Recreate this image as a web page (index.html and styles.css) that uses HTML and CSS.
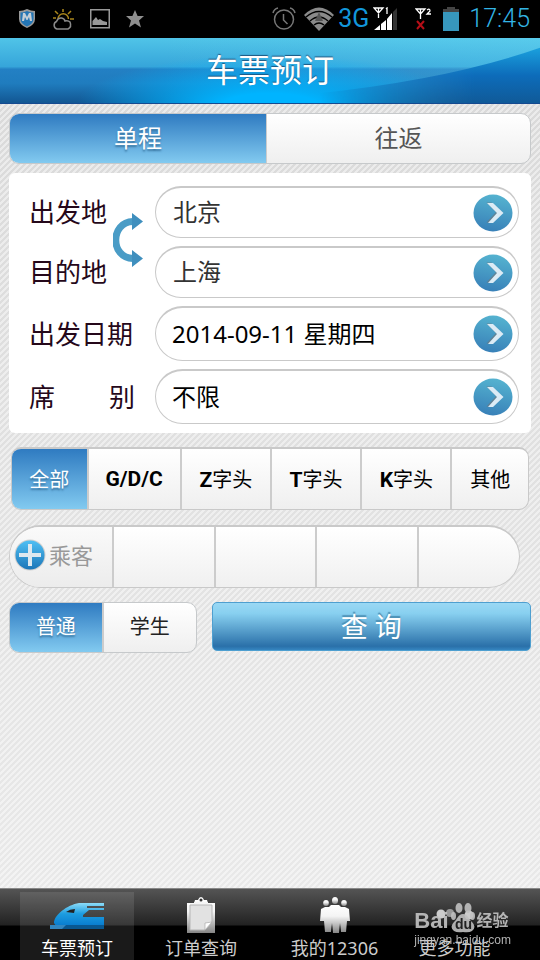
FILE: index.html
```html
<!DOCTYPE html>
<html lang="zh-CN">
<head>
<meta charset="utf-8">
<meta name="viewport" content="width=device-width, initial-scale=1">
<title>车票预订</title>
<link rel="stylesheet" href="styles.css">
</head>
<body>
<svg width="0" height="0" class="defs" aria-hidden="true">
  <defs>
    <linearGradient id="go" x1="0.6" y1="0" x2="0.4" y2="1"><stop offset="0" stop-color="#55b3d0"/><stop offset="1" stop-color="#3880b8"/></linearGradient>
    <linearGradient id="plus" x1="0" y1="0" x2="0" y2="1"><stop offset="0" stop-color="#50c0f4"/><stop offset="1" stop-color="#1c76b8"/></linearGradient>
    <linearGradient id="silver" x1="0" y1="0" x2="0" y2="1"><stop offset="0" stop-color="#fff"/><stop offset="0.4" stop-color="#f4f4f4"/><stop offset="1" stop-color="#858585"/></linearGradient>
    <linearGradient id="train" x1="0" y1="0" x2="0" y2="1"><stop offset="0" stop-color="#8cdcf8"/><stop offset="0.45" stop-color="#1c9ce0"/><stop offset="1" stop-color="#0678cc"/></linearGradient>
    <symbol id="chevron" viewBox="0 0 40 38">
      <ellipse cx="20" cy="19" rx="19.5" ry="18.5" fill="url(#go)"/>
      <path d="M13.500 8.500h5L29 18 18.500 28.500h-5L23 18z" fill="#777" opacity=".6"/>
      <path d="M14 9h6l10.500 10L20 29h-5l9-10z" fill="#dcebf5"/>
    </symbol>
  </defs>
</svg>

<div class="status">
  <div class="status-group notices">
    <svg width="18" height="20" viewBox="0 0 18 20"><path d="M1 2Q5 2 9 0q4 2 8 2v8q0 6-8 9-8-3-8-9z" fill="#999"/><path d="M2.500 3.500Q6 3.500 9 2q3 1.500 6.500 1.500V10q0 5-6.500 7.500Q2.500 15 2.500 10z" fill="#2476b5"/><path d="M4 12l1-8h2l2 4 2-4h2l1 8h-2l-1-4-1.500 3h-1L7 8l-1 4z" fill="#c4ced6"/></svg>
    <svg width="22" height="23" viewBox="0 0 22 23"><g fill="none" stroke="#a9861c" stroke-width="1.500"><path d="M6 11a5 5 0 0 1 10.500 0M11 4V1M6 6L3 3M16 6l3-3M18 11h4M4 10H1"/></g><path d="M5 21a4 4 0 0 1-.5-7.500Q6 9.500 9.500 10q3 .5 3.500 3 3-1 5 1 2 5-2 7z" fill="#000" stroke="#8b8b8b" stroke-width="1.500"/></svg>
    <svg width="20" height="20" viewBox="0 0 20 20"><path d="M.75.75h18.500v18H.75z" fill="none" stroke="#999" stroke-width="1.500"/><path d="M2.500 16v-4L6 8l2 3 2-1 3 2 4 1v3z" fill="#999"/></svg>
    <svg width="18" height="18" viewBox="0 0 18 18"><path d="M9 0l2.600 6H18l-5 4.500 2 7-6-4-6 4 2-7L0 6h6.400z" fill="#8f8f8f"/></svg>
  </div>
  <div class="status-group signals">
    <svg width="24" height="24" viewBox="0 0 24 24" fill="none" stroke="#777" stroke-width="1.500"><circle cx="12" cy="12.500" r="9.500"/><path d="M11.500 7v6l4 4M1 6q1-4 5-5M23 6q-1-4-5-5"/></svg>
    <svg class="wifi" width="30" height="24" viewBox="0 0 30 24"><path d="M0 8Q15-7 30 8L15 24z" fill="#8a8a8a"/><path d="M2 10q13-11 26 0M6 14q9-8 18 0M10 18q5-4 10 0" fill="none" stroke="#000" stroke-width="1.500"/><path d="M15 5l4 9h-8z" fill="#555"/></svg>
    <span class="network">3G</span>
    <svg width="24" height="24" viewBox="0 0 24 24"><path d="M1 23l6-5v5zM8 17l5-4v10H8zM14 12l5-6v17h-5z" fill="#fff"/><path d="M20 5l4-4v22h-4z" fill="#333"/><path d="M1 1h9L5.500 6zM5.500 1v10M13 2l1-1v6" fill="none" stroke="#fff" stroke-width="1.300"/></svg>
    <svg class="sim" width="18" height="22" viewBox="0 0 18 22"><path d="M1 1h9L5.500 6zM5.500 1v10M12 2q3-2 3 1l-3 3h4" fill="none" stroke="#fff" stroke-width="1.300"/><path d="M2 13l7 8M9 13l-7 8" stroke="#b50e17" stroke-width="2"/></svg>
    <svg class="battery" width="16" height="24" viewBox="0 0 16 24"><path d="M4 0h8v2h4v4H0V2h4z" fill="#444"/><path d="M0 5h16v19H0z" fill="#3797bd"/></svg>
    <time class="clock">17:45</time>
  </div>
</div>

<header class="header">
  <svg class="gloss" viewBox="0 0 540 66" preserveAspectRatio="none" aria-hidden="true">
    <defs><linearGradient id="shade" x1="0" y1="0" x2="0" y2="1"><stop offset="0" stop-color="#1aa0dd"/><stop offset="0.500" stop-color="#0d6cba"/><stop offset="1" stop-color="#105a98"/></linearGradient>
    <linearGradient id="reveal" x1="0" y1="0" x2="1" y2="0"><stop offset="0" stop-color="#fff" stop-opacity="0"/><stop offset="0.700" stop-color="#fff"/></linearGradient>
    <mask id="fade"><path d="M320 0h220v66H320z" fill="url(#reveal)"/></mask></defs>
    <path d="M320 56Q450 42 540 10v56H320z" fill="url(#shade)" mask="url(#fade)"/>
  </svg>
  <h1>车票预订</h1>
</header>

<main class="content">
  <div class="segments trip" role="group" aria-label="行程">
    <button class="seg on" type="button" aria-pressed="true">单程</button>
    <button class="seg" type="button" aria-pressed="false">往返</button>
  </div>

  <form class="panel" id="query">
    <div class="places">
      <label for="from">出发地</label>
      <button class="field place" id="from" type="button"><span>北京</span><svg width="40" height="38"><use href="#chevron"/></svg></button>
      <label for="to">目的地</label>
      <button class="field place" id="to" type="button"><span>上海</span><svg width="40" height="38"><use href="#chevron"/></svg></button>
      <button class="swap" type="button" aria-label="交换">
        <svg width="30" height="54" viewBox="0 0 30 54"><path d="M20 8.500C-3 9-3 45 20 45.500" fill="none" stroke="#4a9cc6" stroke-width="7"/><path d="M19 0l11 8.500L19 17zM19 37l11 8.500L19 54z" fill="#3f8fbe"/></svg>
      </button>
    </div>
    <div class="details">
      <label for="date">出发日期</label>
      <button class="field" id="date" type="button"><span>2014-09-11 星期四</span><svg width="40" height="38"><use href="#chevron"/></svg></button>
      <label class="spread" for="seat"><span>席</span><span>别</span></label>
      <button class="field" id="seat" type="button"><span>不限</span><svg width="40" height="38"><use href="#chevron"/></svg></button>
    </div>
  </form>

  <div class="segments kinds" role="group" aria-label="车次类型">
    <button class="seg on" type="button" aria-pressed="true">全部</button>
    <button class="seg" type="button"><b>G/D/C</b></button>
    <button class="seg" type="button"><b>Z</b>字头</button>
    <button class="seg" type="button"><b>T</b>字头</button>
    <button class="seg" type="button"><b>K</b>字头</button>
    <button class="seg" type="button">其他</button>
  </div>

  <div class="passengers">
    <button class="add" type="button">
      <svg width="32" height="32" viewBox="0 0 32 32"><circle cx="16" cy="16" r="15.500" fill="#d0d0d0"/><circle cx="16" cy="16" r="14.500" fill="url(#plus)"/><path d="M14 5h4v9h9v4h-9v9h-4v-9H5v-4h9z" fill="#dde8ef"/></svg>
      <span>乘客</span>
    </button>
    <div class="slot"></div><div class="slot"></div><div class="slot"></div><div class="slot"></div>
  </div>

  <div class="actions">
    <div class="segments fare" role="group" aria-label="票种">
      <button class="seg on" type="button" aria-pressed="true">普通</button>
      <button class="seg" type="button" aria-pressed="false">学生</button>
    </div>
    <button class="search" type="submit" form="query">查 询</button>
  </div>
</main>

<nav class="tabs">
  <a class="tab current" href="#book">
    <svg width="56" height="38" viewBox="0 0 56 38"><path d="M5 26C5 18 18 8 30 6h25v3H38v2h17v2H40l-6 5v2h21v10H12q-5 0-7-4z" fill="url(#train)"/><path d="M17 15q4-3 9-3l-1 4z" fill="#222"/><path d="M1 28h54v4H1z" fill="#095790"/><path d="M1 28h16l-4 4H1z" fill="#3286c0"/></svg>
    <span>车票预订</span>
  </a>
  <a class="tab" href="#orders">
    <svg width="28" height="38" viewBox="0 0 28 38"><path d="M0 6h7l1-3h3q1-3 3-3t3 3h3l1 3h7v30H0z" fill="url(#silver)"/><circle cx="14" cy="3" r="1.500" fill="#333"/><path d="M3 8h22v17l-7 8H3z" fill="#e2e2e2" stroke="#b5b5b5"/><path d="M18 33v-7l7-1z" fill="#fff" stroke="#aaa" stroke-width=".7"/><path d="M7 5h14v2H7z" fill="#f5f5f5"/></svg>
    <span>订单查询</span>
  </a>
  <a class="tab" href="#account">
    <svg width="30" height="38" viewBox="0 0 30 38"><g fill="url(#silver)"><path d="M1 12l4-2h4l2-2h8l2 2h4l4 2 1 12h-3l-1 11h-5l-1-9-1 10h-6l-1-10-1 9H5L4 24H0z"/><ellipse cx="15" cy="3.500" rx="3" ry="3.500"/><ellipse cx="6" cy="6" rx="2.800" ry="3"/><ellipse cx="24" cy="6" rx="2.800" ry="3"/></g></svg>
    <span>我的12306</span>
  </a>
  <a class="tab" href="#more">
    <svg width="38" height="38" viewBox="0 0 38 38" fill="#999"><circle cx="5" cy="17" r="4.500" fill="#ccc"/><circle cx="14" cy="16" r="4"/><circle cx="33" cy="18" r="4.500" fill="#ccc"/></svg>
    <span>更多功能</span>
  </a>
  <div class="watermark">
    <div class="brand"><span>Bai</span><svg width="24" height="30" viewBox="0 0 24 30" fill="#c0c0c0"><ellipse cx="8" cy="5" rx="3.500" ry="5"/><ellipse cx="17" cy="5" rx="3.500" ry="5"/><ellipse cx="2.500" cy="13" rx="2.500" ry="4"/><ellipse cx="21.500" cy="13" rx="2.500" ry="4"/><path d="M12 11c5 0 6 6 9 8q5 5 0 9-3 2-9 1-6 1-9-1-5-4 0-9c3-2 4-8 9-8z"/><text x="4" y="26">du</text></svg><span class="cn">经验</span></div>
    <div class="site">jingyan.baidu.com</div>
  </div>
</nav>
</body>
</html>
```
FILE: styles.css
```css
* { box-sizing: border-box; }

body {
  margin: 0;
  min-height: 100vh;
  display: flex;
  flex-direction: column;
  font-family: "Noto Sans", "Noto Sans CJK SC", sans-serif;
  color: #000;
  background: #eee;
}

button {
  margin: 0;
  padding: 0;
  border: 0;
  background: none;
  font: inherit;
  color: inherit;
}

svg { display: block; flex: none; }
.defs { position: absolute; }

/* status bar */
.status {
  height: 38px;
  padding: 0 10px 0 18px;
  display: flex;
  align-items: center;
  justify-content: space-between;
  background: #000;
  color: #33b5e5;
  font-family: Roboto, sans-serif;
}
.status-group { display: flex; align-items: center; }
.notices { gap: 16px; }
.signals { gap: 4px; }
.wifi { margin-left: 4px; }
.network { font-size: 25px; line-height: 38px; color: #1296db; }
.sim { margin-left: 14px; }
.battery { margin-left: 6px; }
.clock { margin-left: 6px; font-size: 25px; line-height: 38px; font-weight: 300; }

/* title bar */
.header {
  position: relative;
  height: 66px;
  border-bottom: 1px solid #154a90;
  background:
    radial-gradient(ellipse 36% 80% at 50% 105%, #00b4ff 25%, rgba(0, 180, 255, 0)),
    linear-gradient(90deg, rgba(110, 220, 245, 0) 30%, rgba(110, 220, 245, .3)),
    linear-gradient(#50c4e8, #36a5da 44%, #2380c4 48%, #1f7cbe 70%, #125692);
}
.gloss { position: absolute; inset: 0; width: 100%; height: 100%; }
h1 {
  position: relative;
  margin: 0;
  text-align: center;
  font-size: 32px;
  line-height: 64px;
  font-weight: 400;
  color: #fff;
  text-shadow: 0 -1px 1px #1c5680;
}

.content {
  flex: 1;
  padding: 9px 9px 0;
  background:
    linear-gradient(rgba(255, 255, 255, 0), rgba(255, 255, 255, .4)),
    linear-gradient(135deg, #dadada 25%, #ebebeb 25% 50%, #dadada 50% 75%, #ebebeb 75%) 0 0 / 6px 6px;
}

/* segmented controls */
.segments {
  display: flex;
  border: 1px solid #c6c9cb;
  border-radius: 10px;
  overflow: hidden;
  background: linear-gradient(#fff, #efefef);
}
.seg { flex: 1; padding-bottom: 2px; font-size: 20px; }
.seg + .seg { border-left: 2px solid #ccc; }
.seg.on {
  color: #fff;
  background: linear-gradient(#2f7bc1, #82caf0);
  text-shadow: 0 2px 2px #39759f;
}
.trip { height: 51px; }
.trip .seg { flex: 264 1 0; padding-bottom: 5px; font-size: 24px; color: #555; }
.trip .seg + .seg { border-left-width: 1px; }
.trip .seg.on { flex-grow: 257; color: #fff; }

/* query form */
.panel {
  margin-top: 9px;
  padding: 13px 12px 9px 20px;
  border-radius: 6px;
  background: #fff;
}
.places, .details {
  display: grid;
  grid-template-columns: 106px 1fr;
  column-gap: 20px;
  align-items: center;
}
.places { position: relative; row-gap: 8px; }
.details { margin-top: 8px; row-gap: 8px; }
.panel label { font-size: 26px; line-height: 36px; color: #25081a; }
.spread { display: flex; justify-content: space-between; }
.field {
  height: 55px;
  padding: 0 5px 0 16px;
  display: flex;
  align-items: center;
  justify-content: space-between;
  border: 1px solid #c9c9c9;
  border-top-width: 2px;
  border-radius: 28px;
  background: #fff;
  font-size: 24px;
}
.field span { padding-bottom: 4px; }
.place { height: 52px; padding-left: 17px; color: #333; }
.swap { position: absolute; left: 84px; top: 27px; }

.kinds { height: 63px; margin: 14px 2px 0; border-top-width: 2px; border-color: #c9c9c9; }
.kinds .seg { flex: 90 1 0; }
.kinds .seg:first-child { flex-grow: 76; }
.kinds .seg:nth-child(2) { flex-grow: 93; }
.kinds .seg:last-child { flex-grow: 77; }
.kinds b { font-family: Roboto, sans-serif; font-weight: 700; font-size: 21px; }

/* passengers */
.passengers {
  height: 63px;
  margin: 15px 11px 0 0;
  display: grid;
  grid-template-columns: repeat(5, 1fr);
  border: 1px solid #c9c9c9;
  border-top-width: 2px;
  border-radius: 32px;
  overflow: hidden;
  background: linear-gradient(#fff, #f0f0f0);
}
.slot { border-left: 2px solid #ccc; }
.add {
  padding: 0 0 4px 4px;
  display: flex;
  align-items: center;
  gap: 3px;
  font-size: 22px;
  color: #999;
  background: linear-gradient(#fafafa, #ececec);
}
.add span { padding-bottom: 2px; }

.actions { margin-top: 14px; display: flex; gap: 15px; }
.fare { flex: 187 1 0; height: 51px; }
.fare .seg { padding-bottom: 4px; color: #222; }
.fare .seg.on { color: #fff; }
.search {
  flex: 320 1 0;
  height: 49px;
  border: 1px solid #4e9fd0;
  border-radius: 5px;
  font-size: 27px;
  line-height: 36px;
  color: #fff;
  text-shadow: 0 -2px 1px #4b8fb4;
  background: linear-gradient(#9ad8f4, #88d0f0 22%, #2a70a9 92%, #3585c0);
}

/* bottom tabs */
.tabs {
  position: relative;
  height: 72px;
  padding: 3px 32px 0 20px;
  display: grid;
  grid-template-columns: 114px 134px 133px 1fr;
  border-top: 1px solid #888;
  background: linear-gradient(#545454, #222 36px, #000 37px);
}
.tab {
  padding-top: 5px;
  display: flex;
  flex-direction: column;
  align-items: center;
  font-size: 18px;
  line-height: 26px;
  color: #ccc;
  text-decoration: none;
}
.tab.current { color: #fff; background: rgba(255, 255, 255, .1); }

.watermark {
  position: absolute;
  right: 29px;
  top: 14px;
  color: #c4c4c4;
  opacity: .9;
  font-family: "Liberation Sans", "Noto Sans CJK SC", sans-serif;
}
.brand { display: flex; align-items: flex-end; gap: 2px; height: 30px; font-size: 22px; line-height: 24px; font-weight: 700; }
.brand text { font-size: 14px; fill: #222; }
.brand .cn { font-size: 16px; }
.site { font-size: 12px; line-height: 14px; }
```
